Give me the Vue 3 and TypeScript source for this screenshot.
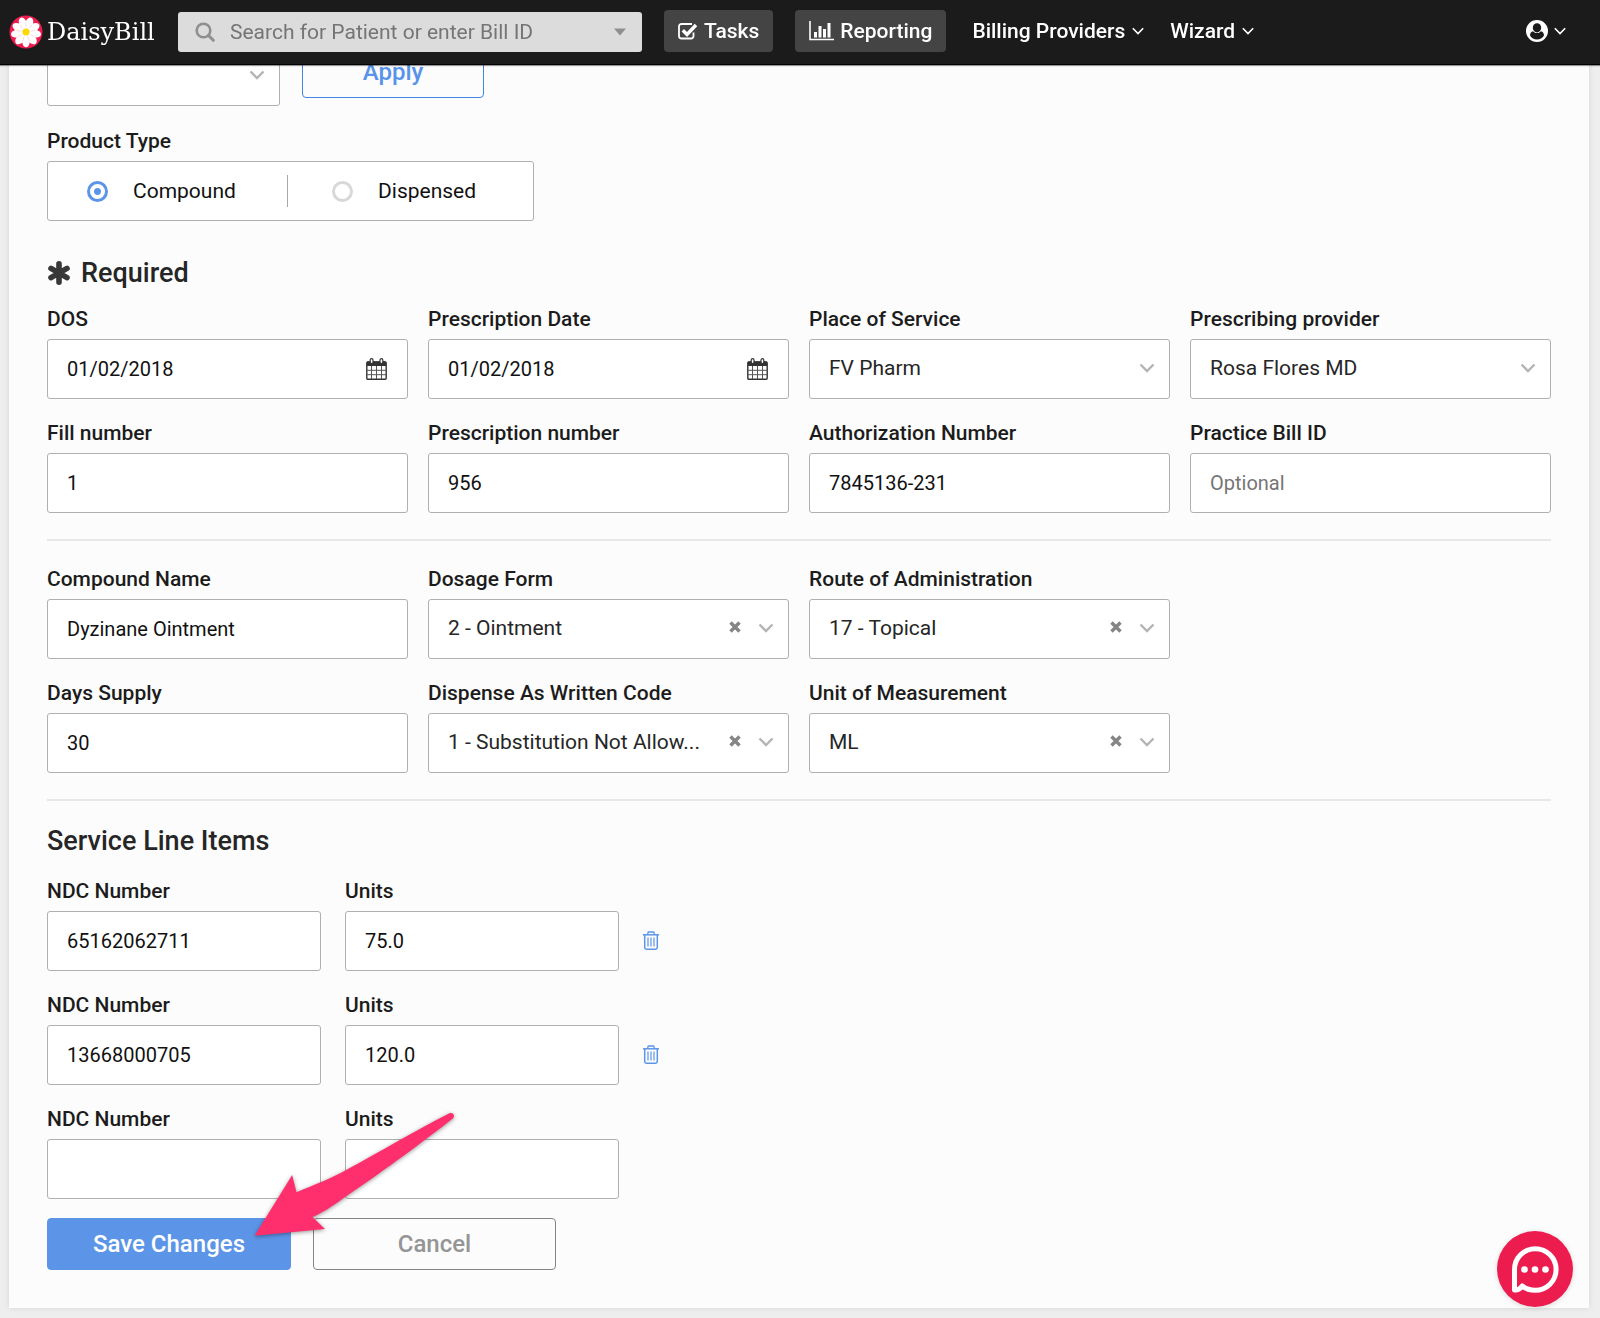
<script setup lang="ts">
import { reactive, ref } from 'vue'

type Kind = 'text' | 'date' | 'select'

interface Field {
  id: string
  label: string
  kind: Kind
  value: string
  placeholder?: string
  clearable?: boolean
}

interface LineItem {
  ndc: string
  units: string
  removable: boolean
}

const search = ref('')
const template = ref('')
const productType = ref('compound')

const productTypes = [
  { value: 'compound', label: 'Compound' },
  { value: 'dispensed', label: 'Dispensed' },
]

const groups = reactive<Field[][]>([
  [
    { id: 'dos', label: 'DOS', kind: 'date', value: '01/02/2018' },
    { id: 'rx-date', label: 'Prescription Date', kind: 'date', value: '01/02/2018' },
    { id: 'place', label: 'Place of Service', kind: 'select', value: 'FV Pharm' },
    { id: 'provider', label: 'Prescribing provider', kind: 'select', value: 'Rosa Flores MD' },
    { id: 'fill', label: 'Fill number', kind: 'text', value: '1' },
    { id: 'rx-number', label: 'Prescription number', kind: 'text', value: '956' },
    { id: 'auth', label: 'Authorization Number', kind: 'text', value: '7845136-231' },
    { id: 'bill-id', label: 'Practice Bill ID', kind: 'text', value: '', placeholder: 'Optional' },
  ],
  [
    { id: 'compound', label: 'Compound Name', kind: 'text', value: 'Dyzinane Ointment' },
    { id: 'dosage', label: 'Dosage Form', kind: 'select', value: '2 - Ointment', clearable: true },
    { id: 'route', label: 'Route of Administration', kind: 'select', value: '17 - Topical', clearable: true },
    { id: 'days', label: 'Days Supply', kind: 'text', value: '30' },
    { id: 'daw', label: 'Dispense As Written Code', kind: 'select', value: '1 - Substitution Not Allow...', clearable: true },
    { id: 'unit', label: 'Unit of Measurement', kind: 'select', value: 'ML', clearable: true },
  ],
])

const options: Record<string, string[]> = {
  place: ['FV Pharm'],
  provider: ['Rosa Flores MD'],
  dosage: ['2 - Ointment'],
  route: ['17 - Topical'],
  daw: ['1 - Substitution Not Allow...'],
  unit: ['ML'],
}

const items = reactive<LineItem[]>([
  { ndc: '65162062711', units: '75.0', removable: true },
  { ndc: '13668000705', units: '120.0', removable: true },
  { ndc: '', units: '', removable: false },
])

function removeItem(index: number): void {
  items.splice(index, 1)
}
</script>

<template>
  <header class="navbar">
    <a class="brand" href="#">
      <svg class="brand-mark" viewBox="0 0 34 34" aria-hidden="true">
        <circle cx="17" cy="17" r="16.5" fill="#ec1c4f" />
        <g fill="#fff">
          <ellipse v-for="n in 9" :key="n" cx="17" cy="8" rx="3.9" ry="6.2" :transform="`rotate(${(n - 1) * 40 + 20} 17 17)`" />
        </g>
        <g stroke="#f3c3d0" stroke-width="0.6">
          <path v-for="n in 9" :key="n" d="M17 12V7.500" :transform="`rotate(${(n - 1) * 40} 17 17)`" />
        </g>
        <circle cx="17" cy="17" r="3.500" fill="#ffd800" />
      </svg>
      <span class="brand-name">DaisyBill</span>
    </a>

    <div class="search">
      <svg class="search-icon" viewBox="0 0 20 20" aria-hidden="true">
        <circle cx="8.500" cy="8.500" r="6.800" fill="none" stroke="#8f8f8f" stroke-width="2.600" />
        <path d="M13.500 13.500l4.800 4.800" stroke="#8f8f8f" stroke-width="3" stroke-linecap="round" />
      </svg>
      <input v-model="search" type="text" aria-label="Search" placeholder="Search for Patient or enter Bill ID" />
      <button class="search-caret" type="button" aria-label="Show search options">
        <svg viewBox="0 0 14 8" aria-hidden="true"><path d="M1 .5h12L7 7.500z" fill="#8f8f8f" /></svg>
      </button>
    </div>

    <nav class="links">
      <a class="nav-button" href="#">
        <svg class="tasks-icon" viewBox="0 0 20 18" aria-hidden="true">
          <path d="M15.500 10.500V14a2.500 2.500 0 0 1-2.500 2.500H3.500A2.500 2.500 0 0 1 1 14V4.500A2.500 2.500 0 0 1 3.500 2H14" fill="none" stroke="#fff" stroke-width="1.800" />
          <path d="M4.800 8.300l4.200 4.200 9-9.500" fill="none" stroke="#fff" stroke-width="3.400" />
        </svg>
        <span>Tasks</span>
      </a>
      <a class="nav-button" href="#">
        <svg class="chart-icon" viewBox="0 0 25 20" aria-hidden="true">
          <path d="M1 0v18.500h24" fill="none" stroke="#fff" stroke-width="1.600" />
          <path d="M6.500 16.500V11M11 16.500V5M15.500 16.500V8M20 16.500V2" stroke="#fff" stroke-width="3" />
        </svg>
        <span>Reporting</span>
      </a>
      <a class="nav-link" href="#">
        <span>Billing Providers</span>
        <svg class="nav-chevron" viewBox="0 0 12 8" aria-hidden="true"><path d="M.8 1.200L6 6.500l5.200-5.300" /></svg>
      </a>
      <a class="nav-link" href="#">
        <span>Wizard</span>
        <svg class="nav-chevron" viewBox="0 0 12 8" aria-hidden="true"><path d="M.8 1.200L6 6.500l5.200-5.300" /></svg>
      </a>
    </nav>

    <button class="account" type="button" aria-label="Account">
      <svg class="account-icon" viewBox="0 0 22 22" aria-hidden="true">
        <circle cx="11" cy="11" r="11" fill="#fff" />
        <path d="M4 15.500c0-2.700 1.500-4.300 3.300-4.300 1 1.200 2.300 1.800 3.700 1.800s2.700-.6 3.700-1.800c1.800 0 3.300 1.600 3.300 4.300-1.500 2.400-4 4-7 4s-5.500-1.600-7-4z" fill="#1b1b1b" />
        <ellipse cx="11" cy="7.800" rx="4.800" ry="5.200" fill="#fff" />
        <ellipse cx="11" cy="7.800" rx="4.200" ry="4.600" fill="#1b1b1b" />
      </svg>
      <svg class="nav-chevron" viewBox="0 0 12 8" aria-hidden="true"><path d="M.8 1.200L6 6.500l5.200-5.300" /></svg>
    </button>
  </header>

  <main class="page">
    <form class="card" @submit.prevent>
      <div class="template-row">
        <div class="control template">
          <select v-model="template" aria-label="Template"><option value=""></option></select>
          <svg class="chevron" viewBox="0 0 16 10" aria-hidden="true"><path d="M1.500 1.500L8 8l6.500-6.500" /></svg>
        </div>
        <button class="button outline" type="button">Apply</button>
      </div>

      <fieldset class="product">
        <legend>Product Type</legend>
        <div class="choices">
          <label v-for="type in productTypes" :key="type.value" class="choice">
            <input v-model="productType" type="radio" name="product-type" :value="type.value" />
            <span>{{ type.label }}</span>
          </label>
        </div>
      </fieldset>

      <h2 class="required">
        <svg class="asterisk" viewBox="0 0 24 24" aria-hidden="true">
          <path d="M12 2.800v18.400M4 7.400l16 9.200M20 7.400L4 16.600" stroke="#383838" stroke-width="5.600" stroke-linecap="round" />
        </svg>
        <span>Required</span>
      </h2>

      <template v-for="(group, g) in groups" :key="g">
        <div class="grid" :class="{ partial: g === 1 }">
          <div v-for="field in group" :key="field.id" class="field">
            <label :for="field.id">{{ field.label }}</label>
            <div class="control" :class="{ clearable: field.clearable }">
              <select v-if="field.kind === 'select'" :id="field.id" v-model="field.value">
                <option value=""></option>
                <option v-for="option in options[field.id]" :key="option">{{ option }}</option>
              </select>
              <input v-else :id="field.id" v-model="field.value" type="text" :placeholder="field.placeholder" />
              <svg v-if="field.kind === 'date'" class="calendar" viewBox="0 0 21 22" aria-hidden="true">
                <rect x=".8" y="4" width="19.400" height="17.200" rx="1" fill="#fff" stroke="#333" stroke-width="1.400" />
                <path d="M1 3.500h19V8H1z" fill="#333" />
                <path d="M5.500 8v13M10.500 8v13M15.500 8v13M1 12.300h19M1 16.700h19" stroke="#555" stroke-width="1" />
                <rect x="4.200" y=".7" width="2.800" height="5" rx="1.400" fill="#fff" stroke="#333" stroke-width="1.200" />
                <rect x="14" y=".7" width="2.800" height="5" rx="1.400" fill="#fff" stroke="#333" stroke-width="1.200" />
              </svg>
              <button v-if="field.clearable" class="clear" type="button" :aria-label="`Clear ${field.label}`" @click="field.value = ''">
                <svg viewBox="0 0 12 12" aria-hidden="true"><path d="M1.500 1.500l9 9M10.500 1.500l-9 9" stroke="#858585" stroke-width="3.400" /></svg>
              </button>
              <svg v-if="field.kind === 'select'" class="chevron" viewBox="0 0 16 10" aria-hidden="true"><path d="M1.500 1.500L8 8l6.500-6.500" /></svg>
            </div>
          </div>
        </div>
        <hr />
      </template>

      <h2 class="items-title">Service Line Items</h2>
      <div class="items">
        <div v-for="(item, i) in items" :key="i" class="item">
          <div class="field">
            <label :for="`ndc-${i}`">NDC Number</label>
            <div class="control"><input :id="`ndc-${i}`" v-model="item.ndc" type="text" /></div>
          </div>
          <div class="field">
            <label :for="`units-${i}`">Units</label>
            <div class="control"><input :id="`units-${i}`" v-model="item.units" type="text" /></div>
          </div>
          <button v-if="item.removable" class="trash" type="button" aria-label="Remove line item" @click="removeItem(i)">
            <svg viewBox="0 0 16 19" fill="none" stroke="#5c95e8" aria-hidden="true">
              <path d="M0 3.800h16" stroke-width="1.500" />
              <path d="M4.500 3.500l.8-2.500h5.400l.8 2.500" stroke-width="1.300" />
              <path d="M1.700 4v12.500a1.700 1.700 0 0 0 1.700 1.700h9.200a1.700 1.700 0 0 0 1.700-1.700V4" stroke-width="1.500" />
              <path d="M5 6.500v9M8 6.500v9M11 6.500v9" stroke-width="1.200" />
            </svg>
          </button>
        </div>
      </div>

      <div class="actions">
        <button class="button primary" type="submit">Save Changes</button>
        <button class="button neutral" type="button">Cancel</button>
        <svg class="pointer" viewBox="0 0 212 132" aria-hidden="true">
          <path d="M8.600 127.700L46.200 67l4.300 17.200C68 77 84 71 101 61.500C136 43 168 23 203.500 5.300c3-1.300 6 2 3.600 4.900C177 34 137 63 110 81.500C92 94 79 104 66.500 109L79 121z" />
        </svg>
      </div>
    </form>
  </main>

  <button class="chat" type="button" aria-label="Open chat">
    <svg viewBox="0 0 76 76" aria-hidden="true">
      <path d="M17.500 59V38.500a20.800 20.800 0 1 1 20.800 20.800c-5 0-9.500-1.500-13-4.300-2 2.700-4.500 4.500-7.800 4z" fill="none" stroke="#fff" stroke-width="5" stroke-linejoin="round" />
      <g fill="#fff"><circle cx="27.500" cy="38.500" r="3.300" /><circle cx="38" cy="38.500" r="3.300" /><circle cx="48.500" cy="38.500" r="3.300" /></g>
    </svg>
  </button>
</template>

<style>
body {
  background: #eee;
}
</style>

<style scoped>
.navbar,
.page,
.chat {
  font-family: Roboto, 'Liberation Sans', sans-serif;
}

.navbar *,
.page * {
  box-sizing: border-box;
}

button,
input,
select {
  font: inherit;
  margin: 0;
}

button {
  padding: 0;
  border: 0;
  background: none;
  cursor: pointer;
}

svg {
  display: block;
  flex: none;
}

.navbar {
  position: fixed;
  top: 0;
  left: 0;
  right: 0;
  z-index: 10;
  display: flex;
  align-items: center;
  height: 65px;
  padding: 0 34px 0 9px;
  background: #1b1b1b;
  border-bottom: 1px solid #000;
  box-shadow: 0 1px 1px rgba(0, 0, 0, 0.4);
  box-sizing: border-box;
  color: #fff;
  font-size: 21px;
  font-weight: 500;
}

.navbar a {
  color: inherit;
  text-decoration: none;
  white-space: nowrap;
}

.brand {
  display: flex;
  align-items: center;
  gap: 4px;
  width: 169px;
}

.brand-mark {
  width: 34px;
  height: 34px;
}

.brand-name {
  font-family: 'DejaVu Serif', serif;
  font-weight: 400;
  font-size: 24px;
}

.search {
  display: flex;
  align-items: center;
  width: 464px;
  height: 40px;
  padding: 0 15px 0 17px;
  background: #dcdcdc;
  border-radius: 3px;
}

.search-icon {
  width: 20px;
  height: 20px;
}

.search input {
  flex: 1;
  min-width: 0;
  height: 40px;
  padding: 0 15px;
  border: 0;
  outline: 0;
  background: none;
  color: #333;
  font-weight: 400;
}

.search input::placeholder {
  color: #757575;
  opacity: 1;
}

.search-caret svg {
  width: 14px;
  height: 8px;
}

.links {
  display: flex;
  align-items: center;
  gap: 22px;
  margin: 0 0 2px 22px;
}

.nav-button {
  display: flex;
  align-items: center;
  gap: 6px;
  height: 42px;
  padding: 0 14px;
  background: #444;
  border-radius: 4px;
}

.tasks-icon {
  width: 20px;
  height: 18px;
}

.chart-icon {
  width: 25px;
  height: 20px;
}

.nav-link {
  display: flex;
  align-items: center;
  gap: 7px;
  margin-left: 4px;
}

.nav-chevron {
  width: 12px;
  height: 8px;
  fill: none;
  stroke: #fff;
  stroke-width: 1.6;
}

.account {
  display: flex;
  align-items: center;
  gap: 6px;
  margin: 0 0 2px auto;
}

.account-icon {
  width: 22px;
  height: 22px;
}

.page {
  padding: 0 11px 10px 9px;
  color: #1c1c1c;
  font-size: 21px;
  line-height: 24px;
}

.card {
  padding: 46px 38px 38px;
  background: #fcfcfc;
  box-shadow: 0 0 6px rgba(0, 0, 0, 0.1);
}

.template-row {
  display: flex;
  align-items: flex-start;
  gap: 22px;
}

.template {
  width: 233px;
}

.control {
  position: relative;
}

.control input,
.control select {
  display: block;
  width: 100%;
  height: 60px;
  padding: 0 19px;
  border: 1px solid #b0b0b0;
  border-radius: 3px;
  outline: 0;
  background: #fff;
  color: #111;
}

.control input {
  font-size: 20px;
}

.control select {
  appearance: none;
  padding-right: 44px;
  padding-bottom: 2px;
  color: #262626;
  text-overflow: ellipsis;
}

.control.clearable select {
  padding-right: 74px;
}

.control input::placeholder {
  color: #757575;
  opacity: 1;
}

.chevron {
  position: absolute;
  top: 24px;
  right: 15px;
  width: 16px;
  height: 10px;
  fill: none;
  stroke: #b4b4b4;
  stroke-width: 2.4;
  pointer-events: none;
}

.calendar {
  position: absolute;
  top: 19px;
  right: 21px;
  width: 21px;
  height: 22px;
}

.clear {
  position: absolute;
  top: 22px;
  right: 48px;
}

.clear svg {
  width: 12px;
  height: 12px;
}

.button {
  height: 52px;
  border: 1px solid;
  border-radius: 4px;
  font-size: 24px;
  font-weight: 500;
}

.outline {
  width: 182px;
  border-color: #3f85e6;
  color: #5793ea;
}

.primary {
  width: 244px;
  border-color: #5c95e8;
  background: #5c95e8;
  color: #fff;
}

.neutral {
  width: 243px;
  border-color: #858585;
  color: #959595;
}

.product {
  min-width: 0;
  margin: 23px 0 0;
  padding: 0;
  border: 0;
}

.product legend {
  padding: 0;
  margin-bottom: 8px;
  font-weight: 500;
}

.choices {
  display: flex;
  align-items: center;
  width: 487px;
  height: 60px;
  border: 1px solid #b0b0b0;
  border-radius: 3px;
  background: #fff;
  color: #111;
}

.choice {
  display: flex;
  align-items: center;
  gap: 25px;
  height: 32px;
  padding-left: 39px;
}

.choice:first-child {
  width: 239px;
}

.choice + .choice {
  flex: 1;
  padding-left: 44px;
  border-left: 1px solid #a8a8a8;
}

.choice input {
  appearance: none;
  width: 21px;
  height: 21px;
  border: 3px solid #d8d8d8;
  border-radius: 50%;
  background: #fff;
}

.choice input:checked {
  border-color: #5c95e8;
  background: radial-gradient(circle, #5c95e8 3px, #fff 4px);
}

h2 {
  margin: 0;
  font-size: 27px;
  font-weight: 500;
  line-height: 30px;
  color: #262626;
}

.required {
  display: flex;
  align-items: center;
  gap: 10px;
  margin: 37px 0 19px;
}

.asterisk {
  width: 24px;
  height: 24px;
}

.grid {
  display: grid;
  grid-template-columns: repeat(4, minmax(0, 1fr));
  gap: 22px 20px;
}

.partial .field:nth-child(3n + 1) {
  grid-column: 1;
}

.field {
  display: flex;
  flex-direction: column;
  gap: 8px;
  min-width: 0;
}

.field label {
  font-weight: 500;
}

hr {
  height: 2px;
  margin: 26px 0;
  border: 0;
  background: #e8e8e8;
}

.items-title {
  margin: -1px 0 23px;
}

.items {
  display: flex;
  flex-direction: column;
  gap: 22px;
}

.item {
  display: flex;
  align-items: flex-end;
  gap: 24px;
}

.item .field {
  width: 274px;
}

.trash {
  display: flex;
  align-items: center;
  height: 60px;
  padding-bottom: 2px;
}

.trash svg {
  width: 16px;
  height: 19px;
}

.actions {
  position: relative;
  display: flex;
  gap: 22px;
  margin-top: 19px;
}

.pointer {
  position: absolute;
  top: -110px;
  left: 199px;
  width: 212px;
  height: 132px;
  fill: #ff2f6d;
  filter: drop-shadow(0 1px 2px rgba(0, 0, 0, 0.4));
  pointer-events: none;
}

.chat {
  position: fixed;
  right: 27px;
  bottom: 11px;
  width: 76px;
  height: 76px;
  border-radius: 50%;
  background: #ec1c4f;
  box-shadow: 0 1px 5px rgba(0, 0, 0, 0.15);
}
</style>
